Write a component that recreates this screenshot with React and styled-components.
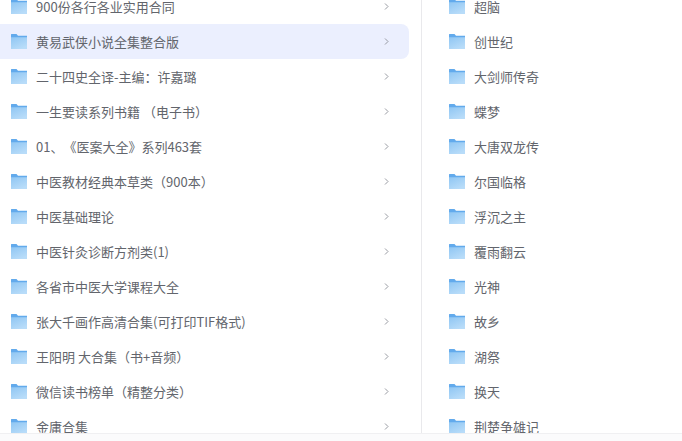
import React from 'react';
import styled, {createGlobalStyle} from 'styled-components';

const GlobalStyle = createGlobalStyle`
  html, body {
    margin: 0;
    padding: 0;
    background: #fff;
    overflow: hidden;
  }
`;

const Page = styled.div`
  width: 682px;
  height: 441px;
  display: flex;
  flex-direction: column;
  font-family: "Noto Sans CJK SC", "Liberation Sans", sans-serif;
  color: #62656c;
  overflow: hidden;
`;

const Columns = styled.div`
  flex: 1;
  min-height: 0;
  display: flex;
  overflow: hidden;
`;

const Footer = styled.div`
  height: 8px;
  flex: none;
  background: #fbfbfc;
  border-top: 1px solid #f0f0f2;
  box-sizing: border-box;
`;

const LeftPane = styled.div`
  width: 422px;
  flex: none;
  box-sizing: border-box;
  padding-right: 12px;
  border-right: 1px solid #e9e9ec;
`;

const RightPane = styled.div`
  flex: 1;
  padding-left: 27px;
`;

const List = styled.div`
  margin-top: -11px;
`;

const Row = styled.div`
  height: 35px;
  display: flex;
  align-items: center;
  box-sizing: border-box;
  padding-left: ${p => p.$inset}px;
  background: ${p => (p.$active ? '#ebeffe' : 'transparent')};
  border-radius: 0 8px 8px 0;
`;

const Name = styled.span`
  flex: 1;
  margin-left: 9px;
  font-size: 13px;
  line-height: 17px;
  white-space: pre;
  text-spacing-trim: space-all;
`;

const Chevron = styled.svg`
  width: 5px;
  height: 7px;
  flex: none;
  margin-right: 20px;
`;

const FolderIcon = ({id}) => (
  <svg width="16" height="15" viewBox="0 0 16 15" style={{flex: 'none'}}>
    <defs>
      <linearGradient id={id} x1="0" y1="0" x2="0.6" y2="1">
        <stop offset="0" stopColor="#8fc6f3"/>
        <stop offset="1" stopColor="#b8dcf9"/>
      </linearGradient>
    </defs>
    <path d="M.5 0h5l1.5 1.8h9V15H.5a.5.5 0 0 1-.5-.5V.5A.5.5 0 0 1 .5 0z" fill="#62aaec"/>
    <path d="M0 3.2h16V15H.5a.5.5 0 0 1-.5-.5z" fill={`url(#${id})`}/>
  </svg>
);

const Item = ({name, id, inset, active, arrow}) => (
  <Row $inset={inset} $active={active}>
    <FolderIcon id={id}/>
    <Name>{name}</Name>
    {arrow && (
      <Chevron viewBox="0 0 5 7">
        <path d="M1 0.5L4 3.5L1 6.5" fill="none" stroke="#8d9097" strokeWidth="0.9"/>
      </Chevron>
    )}
  </Row>
);

const leftItems = [
  '900份各行各业实用合同',
  '黄易武侠小说全集整合版',
  '二十四史全译-主编：许嘉璐',
  '一生要读系列书籍 （电子书）',
  '01、《医案大全》系列463套',
  '中医教材经典本草类（900本）',
  '中医基础理论',
  '中医针灸诊断方剂类(1)',
  '各省市中医大学课程大全',
  '张大千画作高清合集(可打印TIF格式)',
  '王阳明 大合集（书+音频）',
  '微信读书榜单（精整分类）',
  '金庸合集',
];

const rightItems = [
  '超脑', '创世纪', '大剑师传奇', '蝶梦', '大唐双龙传', '尔国临格', '浮沉之主',
  '覆雨翻云', '光神', '故乡', '湖祭', '换天', '荆楚争雄记',
];

const App = () => (
  <Page>
    <GlobalStyle/>
    <Columns>
      <LeftPane>
        <List>
          {leftItems.map((name, i) => (
            <Item key={name} id={`l${i}`} name={name} inset={11} active={i === 1} arrow/>
          ))}
        </List>
      </LeftPane>
      <RightPane>
        <List>
          {rightItems.map((name, i) => (
            <Item key={name} id={`r${i}`} name={name} inset={0}/>
          ))}
        </List>
      </RightPane>
    </Columns>
    <Footer/>
  </Page>
);

export default App;
